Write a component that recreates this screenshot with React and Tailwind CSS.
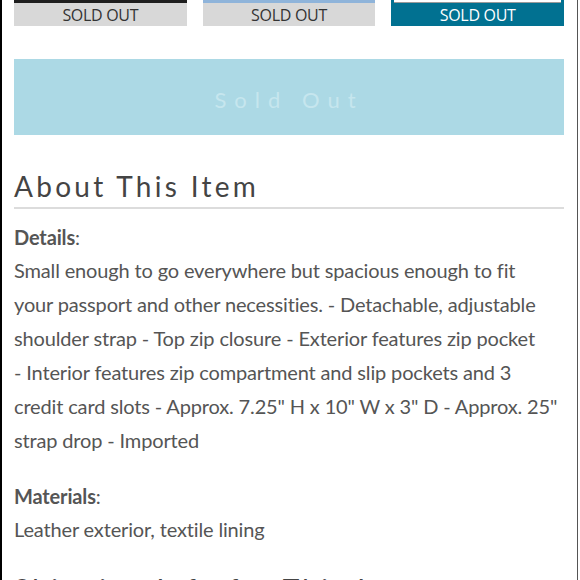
import React from 'react';

const tiles = [
  { label: 'SOLD OUT', swatch: 'bg-[#1e1e1e]', active: false },
  { label: 'SOLD OUT', swatch: 'bg-[#8fb4da]', active: false },
  { label: 'SOLD OUT', swatch: 'bg-white', active: true },
];

const detailLines = [
  'Small enough to go everywhere but spacious enough to fit',
  'your passport and other necessities. - Detachable, adjustable',
  'shoulder strap - Top zip closure - Exterior features zip pocket',
  '- Interior features zip compartment and slip pockets and 3',
  'credit card slots - Approx. 7.25" H x 10" W x 3" D - Approx. 25"',
  'strap drop - Imported',
];

const body = "font-['Lato',sans-serif] text-[20px] tracking-[-0.15px]";
const display = "font-['Lato',sans-serif]";

export default function App() {
  return (
    <div className="w-[580px] h-[580px] overflow-hidden bg-white">
      <div className="w-[578px] min-h-[580px] border-l-2 border-black border-r border-r-[#555] pl-3 pr-[13px]">
        {/* colour options */}
        <div className="grid grid-cols-3 gap-4">
          {tiles.map((t, i) => (
            <div key={i} className={t.active ? 'bg-[#017191] px-[3px]' : 'bg-[#d8d8d8]'}>
              <div className={`h-[3px] ${t.swatch} ${t.active ? 'border-b border-[#9a9a9a]' : ''}`} />
              <div
                className={`h-[23px] flex items-center justify-center text-[16px] leading-none font-['Open_Sans',sans-serif] tracking-[-0.3px] ${
                  t.active ? 'text-white' : 'text-[#333]'
                }`}
              >
                {t.label}
              </div>
            </div>
          ))}
        </div>

        {/* sold out button */}
        <button
          disabled
          className={`mt-[33px] w-full h-[76px] pt-[4px] bg-[#acd9e5] text-[#c6e6ee] text-[22px] tracking-[8px] ${display}`}
        >
          Sold Out
        </button>

        {/* about */}
        <h2 className={`mt-[33px] text-[28px] leading-[36px] tracking-[3.3px] text-[#444] ${display} pb-[3px] border-b-2 border-[#dcdcdc]`}>
          About This Item
        </h2>

        <div className={`mt-[13px] leading-[34px] text-[#555] ${body}`}>
          <p className="leading-[31px]">
            <span className="font-bold">Details</span>:
          </p>
          <p>
            {detailLines.map((l, i) => (
              <span key={i} className="block whitespace-nowrap">
                {l}
              </span>
            ))}
          </p>

          <p className="mt-[24px] leading-[31px]">
            <span className="font-bold">Materials</span>:
          </p>
          <p>Leather exterior, textile lining</p>
        </div>

        <h2 className={`mt-[25px] text-[28px] leading-[36px] tracking-[3.3px] text-[#444] ${display}`}>
          Shipping Info for This Item
        </h2>
      </div>
    </div>
  );
}
